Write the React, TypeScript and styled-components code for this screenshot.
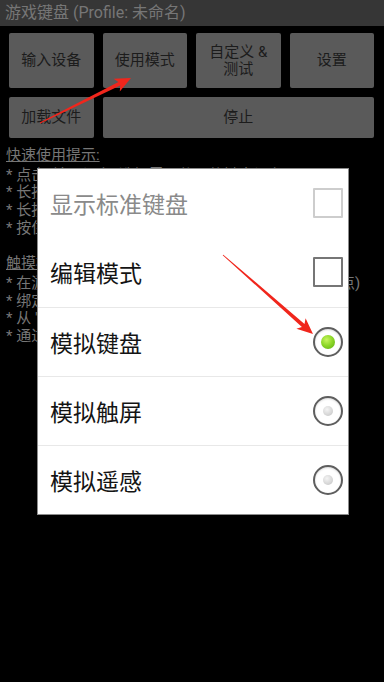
import React from "react";
import styled, { createGlobalStyle } from "styled-components";

const GlobalStyle = createGlobalStyle`
  html, body {
    margin: 0;
    padding: 0;
    background: #000;
  }
  body {
    font-family: "Roboto", "Noto Sans CJK SC", sans-serif;
  }
  * { box-sizing: border-box; }
`;

const Screen = styled.div`
  position: relative;
  width: 384px;
  height: 682px;
  overflow: hidden;
  background: #000;
`;

const TitleBar = styled.div`
  height: 26px;
  background: #363636;
  color: #767676;
  font-size: 16px;
  line-height: 26px;
  padding-left: 5px;
  white-space: nowrap;
`;

const ButtonGrid = styled.div`
  display: grid;
  grid-template-columns: repeat(4, 1fr);
  grid-template-rows: 55px 41px;
  column-gap: 9px;
  row-gap: 9px;
  padding: 7px 10px 0 9px;
`;

const ActionButton = styled.div<{ $span?: number }>`
  grid-column: span ${(p) => p.$span ?? 1};
  display: flex;
  align-items: center;
  justify-content: center;
  text-align: center;
  background: #5a5a5a;
  border-radius: 2px;
  color: #1c1c1c;
  font-size: 15px;
  line-height: 17px;
`;

const Help = styled.div`
  padding: 9px 6px 0 6px;
  color: #767676;
  font-size: 15px;
  line-height: 17.7px;
  white-space: nowrap;
`;

const HelpTitle = styled.div`
  text-decoration: underline;
  margin-bottom: 2px;
`;

const HelpLine = styled.div``;

const Gap = styled.div`
  height: 17.7px;
`;

const Overlay = styled.div`
  position: absolute;
  inset: 0;
  display: flex;
  align-items: center;
  justify-content: center;
  padding-left: 2px;
`;

const Dialog = styled.div`
  width: 312px;
  background: #fff;
  border: 1px solid #8c8c8c;
  display: flex;
  flex-direction: column;
`;

const Row = styled.div<{ $divider?: boolean }>`
  height: 69px;
  display: flex;
  align-items: center;
  justify-content: space-between;
  padding: 0 5px 0 12px;
  border-top: ${(p) => (p.$divider ? "1px solid #e8e8e8" : "none")};
`;

const Label = styled.span<{ $disabled?: boolean }>`
  font-family: "Noto Sans CJK SC", sans-serif;
  font-size: 23px;
  color: ${(p) => (p.$disabled ? "#8a8a8a" : "#141414")};
`;

const CheckBox = styled.div<{ $disabled?: boolean }>`
  width: 30px;
  height: 30px;
  border: 2px solid ${(p) => (p.$disabled ? "#cdcdcd" : "#767676")};
  background: #fff;
  border-radius: 1px;
`;

const Radio = styled.div<{ $checked?: boolean }>`
  width: 30px;
  height: 30px;
  border-radius: 50%;
  border: 2px solid #5e5e5e;
  background: #fff;
  display: flex;
  align-items: center;
  justify-content: center;
  box-shadow: inset 0 1px 2px rgba(0, 0, 0, 0.15);
  &::after {
    content: "";
    width: ${(p) => (p.$checked ? 14 : 10)}px;
    height: ${(p) => (p.$checked ? 14 : 10)}px;
    border-radius: 50%;
    background: ${(p) =>
      p.$checked
        ? "radial-gradient(circle at 40% 35%, #c8f560 0%, #8fd82a 45%, #5aad0e 100%)"
        : "radial-gradient(circle at 40% 35%, #f4f4f4 0%, #d6d6d6 60%, #bdbdbd 100%)"};
  }
`;

const ArrowLayer = styled.svg`
  position: absolute;
  left: 0;
  top: 0;
  width: 384px;
  height: 682px;
  pointer-events: none;
`;

type Pt = [number, number];

function arrowPoints(t: Pt, p: Pt, headLen = 16, headHalf = 7, w0 = 0.4, w1 = 2): string {
  const dx = p[0] - t[0];
  const dy = p[1] - t[1];
  const len = Math.hypot(dx, dy);
  const ux = dx / len;
  const uy = dy / len;
  const nx = -uy;
  const ny = ux;
  const bx = p[0] - ux * headLen;
  const by = p[1] - uy * headLen;
  const bx2 = p[0] - ux * (headLen - 3);
  const by2 = p[1] - uy * (headLen - 3);
  const pts: Pt[] = [
    [t[0] + nx * w0, t[1] + ny * w0],
    [bx2 + nx * w1, by2 + ny * w1],
    [bx + nx * headHalf, by + ny * headHalf],
    p,
    [bx - nx * headHalf, by - ny * headHalf],
    [bx2 - nx * w1, by2 - ny * w1],
    [t[0] - nx * w0, t[1] - ny * w0],
  ];
  return pts.map((q) => `${q[0].toFixed(1)},${q[1].toFixed(1)}`).join(" ");
}

const Arrow: React.FC<{ from: Pt; to: Pt }> = ({ from, to }) => (
  <polygon points={arrowPoints(from, to)} fill="#f0261c" />
);

const buttons = [
  { label: "输入设备" },
  { label: "使用模式" },
  { label: "自定义 &\n测试" },
  { label: "设置" },
  { label: "加载文件" },
  { label: "停止", span: 3 },
];

const quickTips = [
  "* 点击 '输入设备' 选择需要使用的键盘设备",
  "* 长按按钮可以进行快捷设置与调整",
  "* 长按屏幕空白处可以添加新的按键",
  "* 按住按钮可以拖动调整按键位置",
];

const touchTips = [
  "* 在游戏中点击屏幕上需要模拟触摸的位置 (添加触点)",
  "* 绑定按键到触点后即可模拟触摸操作",
  "* 从 '自定义' 中可以修改触点坐标",
  "* 通过 '设置' 可以调整触摸灵敏度",
];

const options = [
  { label: "显示标准键盘", kind: "check", disabled: true },
  { label: "编辑模式", kind: "check" },
  { label: "模拟键盘", kind: "radio", checked: true, divider: true },
  { label: "模拟触屏", kind: "radio", divider: true },
  { label: "模拟遥感", kind: "radio", divider: true },
];

export default function App() {
  return (
    <>
      <GlobalStyle />
      <Screen>
        <TitleBar>游戏键盘 (Profile: 未命名)</TitleBar>
        <ButtonGrid>
          {buttons.map((b) => (
            <ActionButton key={b.label} $span={b.span}>
              <span style={{ whiteSpace: "pre-line" }}>{b.label}</span>
            </ActionButton>
          ))}
        </ButtonGrid>
        <Help>
          <HelpTitle>快速使用提示:</HelpTitle>
          {quickTips.map((t) => (
            <HelpLine key={t}>{t}</HelpLine>
          ))}
          <Gap />
          <HelpTitle>触摸模式使用提示:</HelpTitle>
          {touchTips.map((t) => (
            <HelpLine key={t}>{t}</HelpLine>
          ))}
        </Help>
        <Overlay>
          <Dialog>
            {options.map((o) => (
              <Row key={o.label} $divider={o.divider}>
                <Label $disabled={o.disabled}>{o.label}</Label>
                {o.kind === "check" ? (
                  <CheckBox $disabled={o.disabled} />
                ) : (
                  <Radio $checked={o.checked} />
                )}
              </Row>
            ))}
          </Dialog>
        </Overlay>
        <ArrowLayer viewBox="0 0 384 682">
          <Arrow from={[40, 123]} to={[131, 78]} />
          <Arrow from={[223, 255]} to={[313, 334]} />
        </ArrowLayer>
      </Screen>
    </>
  );
}
